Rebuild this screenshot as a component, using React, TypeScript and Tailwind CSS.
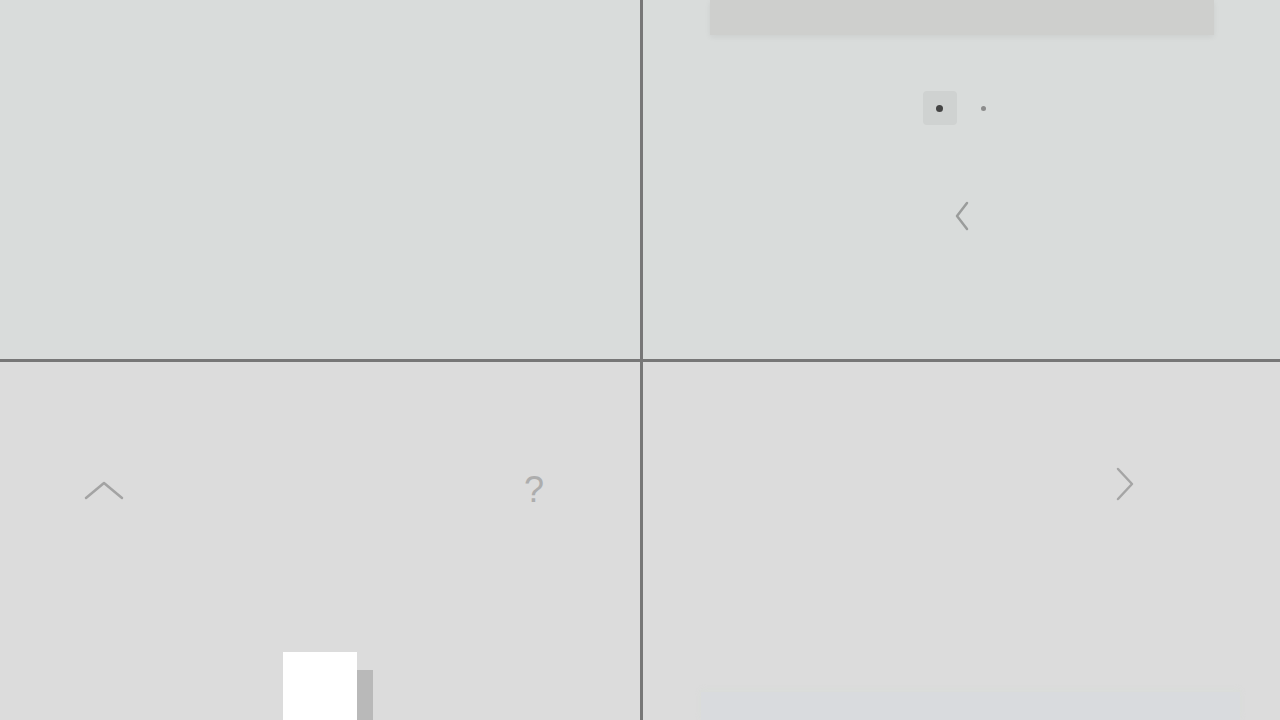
const Chevron = ({ d, w, h, color }: { d: string; w: number; h: number; color: string }) => (
  <svg width={w} height={h} viewBox={`0 0 ${w} ${h}`} fill="none">
    <path d={d} stroke={color} strokeWidth={2.5} strokeLinecap="round" strokeLinejoin="round" />
  </svg>
);

export default function App() {
  return (
    <div className="flex h-[720px] w-[1280px] flex-col overflow-hidden bg-[#dcdcdc] font-['Liberation_Sans',sans-serif]">
      {/* top row */}
      <div className="flex h-[362px] border-b-[3px] border-[#777777] bg-[#d9dcdb]">
        <div className="w-[643px] border-r-[3px] border-[#777777]" />
        <div className="flex flex-1 flex-col items-center">
          <div className="h-[35px] w-[504px] bg-[#cecfcd] shadow-[0_2px_6px_rgba(0,0,0,0.06)]" />
          <div className="mt-[56px] flex items-center gap-[24px] pr-[15px]">
            <div className="flex h-[34px] w-[34px] items-center justify-center rounded-sm bg-[#cfd2d1]">
              <div className="h-[7px] w-[7px] rounded-full bg-[#444]" />
            </div>
            <div className="h-[5px] w-[5px] rounded-full bg-[#8c8c8c]" />
          </div>
          <div className="mt-[75px]">
            <Chevron w={20} h={32} d="M15 3 L5 16 L15 29" color="#9a9c9b" />
          </div>
        </div>
      </div>

      {/* bottom row */}
      <div className="flex flex-1">
        <div className="flex w-[643px] flex-col border-r-[3px] border-[#777777]">
          <div className="flex items-center justify-between pl-[83px] pr-[96px] pt-[110px]">
            <Chevron w={42} h={22} d="M3 19 L21 4 L39 19" color="#a3a3a3" />
            <span className="text-[36px] leading-none text-[#adadad]">?</span>
          </div>
          <div className="mt-auto ml-[283px] flex items-end">
            <div className="h-[68px] w-[74px] bg-white" />
            <div className="h-[50px] w-[16px] bg-[#b9b9b9]" />
          </div>
        </div>
        <div className="flex flex-1 flex-col">
          <div className="flex justify-end pr-[143px] pt-[103px]">
            <Chevron w={24} h={38} d="M5 4 L19 19 L5 34" color="#a5a5a5" />
          </div>
          <div className="mt-auto ml-[58px] mr-[40px] h-[28px] bg-[#d9dbde] shadow-[0_-2px_6px_rgba(215,222,215,0.6)]" />
        </div>
      </div>
    </div>
  );
}
